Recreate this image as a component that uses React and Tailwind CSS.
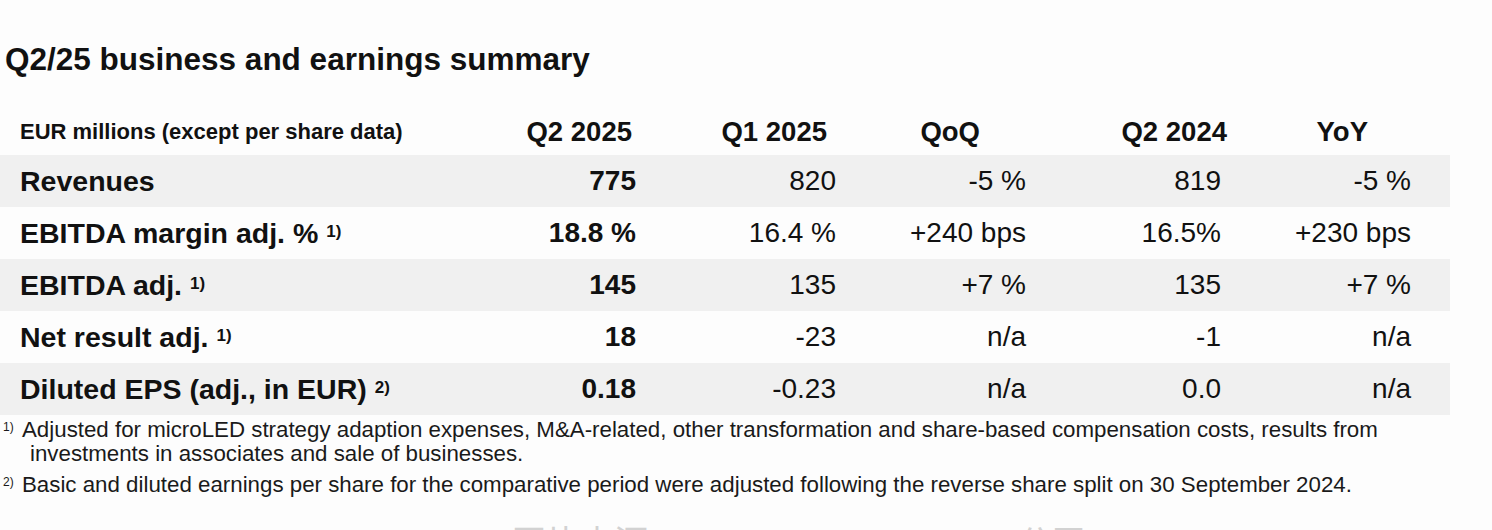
import React from "react";

const rows = [
  { label: "Revenues", note: null, values: ["775", "820", "-5 %", "819", "-5 %"], shaded: true },
  { label: "EBITDA margin adj. %", note: "1)", values: ["18.8 %", "16.4 %", "+240 bps", "16.5%", "+230 bps"], shaded: false },
  { label: "EBITDA adj.", note: "1)", values: ["145", "135", "+7 %", "135", "+7 %"], shaded: true },
  { label: "Net result adj.", note: "1)", values: ["18", "-23", "n/a", "-1", "n/a"], shaded: false },
  { label: "Diluted EPS (adj., in EUR)", note: "2)", values: ["0.18", "-0.23", "n/a", "0.0", "n/a"], shaded: true },
];

const valueCols = ["w-[176px]", "w-[200px]", "w-[190px]", "w-[195px]", "w-[190px]"];

function SummaryRow({ row }) {
  return (
    <div
      className={
        "flex items-center h-[52px] w-[1450px] " +
        (row.shaded ? "bg-[#f0f0f0]" : "bg-transparent")
      }
    >
      <div className="w-[470px] pl-[20px] font-bold text-[28.5px] whitespace-nowrap">
        {row.label}
        {row.note && (
          <sup className="text-[17px] ml-[8px] relative -top-[6px]">{row.note}</sup>
        )}
      </div>
      {row.values.map((v, i) => (
        <div
          key={i}
          className={
            valueCols[i] +
            " text-right pr-[10px] text-[28px] " +
            (i === 0 ? "font-bold" : "font-normal")
          }
        >
          {v}
        </div>
      ))}
    </div>
  );
}

export default function App() {
  return (
    <div
      className="w-[1492px] h-[530px] overflow-hidden bg-[#fdfdfd] text-[#111111]"
      style={{ fontFamily: '"Liberation Sans", Arial, sans-serif' }}
    >
      <h1 className="pt-[40px] pl-[5px] text-[31.5px] font-bold leading-[38px]">
        Q2/25 business and earnings summary
      </h1>

      <div className="mt-[30px]">
        <div className="flex items-center h-[47px] w-[1450px]">
          <div className="w-[470px] pl-[20px] font-bold text-[22px] whitespace-nowrap">
            EUR millions (except per share data)
          </div>
          <div className="w-[176px] text-right pr-[14px] font-bold text-[27.5px]">Q2 2025</div>
          <div className="w-[200px] text-right pr-[19px] font-bold text-[27.5px]">Q1 2025</div>
          <div className="w-[190px] text-right pr-[56px] font-bold text-[27.5px]">QoQ</div>
          <div className="w-[195px] text-right pr-[4px] font-bold text-[27.5px]">Q2 2024</div>
          <div className="w-[190px] text-right pr-[53px] font-bold text-[27.5px]">YoY</div>
        </div>

        {rows.map((row) => (
          <SummaryRow key={row.label} row={row} />
        ))}
      </div>

      <div className="text-[22.3px] leading-[24px] text-[#1a1a1a] pt-[3px]">
        <div className="flex">
          <span className="w-[22px] pl-[3px] text-[12px] leading-[18px]">1)</span>
          <p className="w-[1440px]">
            Adjusted for microLED strategy adaption expenses, M&amp;A-related, other transformation and share-based compensation costs, results from
            <br />
            <span className="pl-[8px]">investments in associates and sale of businesses.</span>
          </p>
        </div>
        <div className="flex mt-[7px]">
          <span className="w-[22px] pl-[3px] text-[12px] leading-[18px]">2)</span>
          <p className="whitespace-nowrap">
            Basic and diluted earnings per share for the comparative period were adjusted following the reverse share split on 30 September 2024.
          </p>
        </div>
      </div>

      <div
        className="flex mt-[24px] text-[34px] text-[#d2d2d2] leading-[40px]"
        style={{ fontFamily: '"Noto Sans CJK SC", sans-serif' }}
      >
        <span className="pl-[512px]">图片来源</span>
        <span className="pl-[370px]">公司</span>
      </div>
    </div>
  );
}
